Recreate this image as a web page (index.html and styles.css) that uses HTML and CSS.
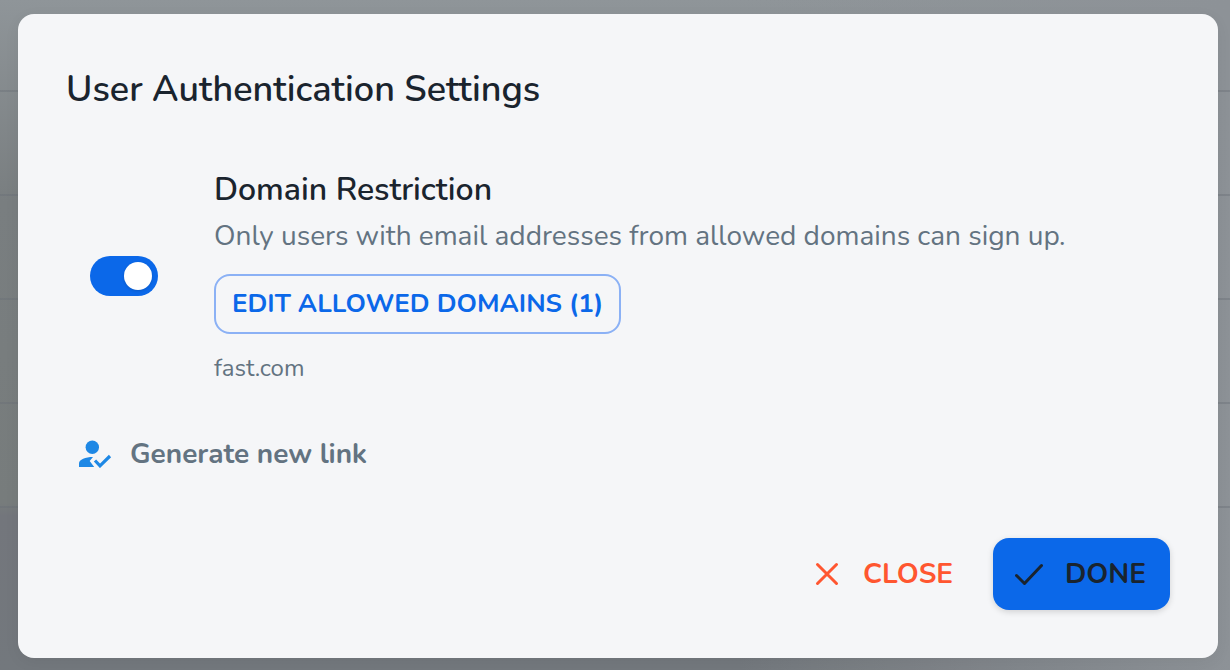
FILE: index.html
```html
<!DOCTYPE html>
<html lang="en">

<head>
    <title>User Authentication Settings</title>
    <meta charset="UTF-8">
    <link rel="stylesheet" href="styles.css">
</head>

<body>
    <div class="overlay">
        <div class="dialog" role="dialog" aria-labelledby="dialog-title">
            <h1 id="dialog-title">User Authentication Settings</h1>

            <div class="setting">
                <input type="checkbox" class="switch" id="domain-restriction" checked>
                <div class="setting-info">
                    <label class="setting-name" for="domain-restriction">Domain Restriction</label>
                    <p class="setting-text">Only users with email addresses from allowed domains can sign up.</p>
                    <button type="button" class="edit-domains">EDIT ALLOWED DOMAINS (1)</button>
                    <p class="domains">fast.com</p>
                </div>
            </div>

            <a class="generate" href="#">
                <svg class="user-icon" viewBox="0 0 34 28" aria-hidden="true">
                    <circle cx="14.300" cy="7.300" r="6.700" fill="currentColor"/>
                    <path d="M1 27v-3.500c0-4 6.500-6.500 14-6.500l-3.300 4 4.500 6z" fill="currentColor"/>
                    <path d="M17 20.500l5 5.300L32 16" fill="none" stroke="currentColor" stroke-width="3.200"/>
                </svg>
                Generate new link
            </a>

            <div class="actions">
                <button type="button" class="btn close">
                    <svg class="close-icon" viewBox="0 0 24 24" aria-hidden="true">
                        <path d="M2.500 2.500l19 19M21.500 2.500l-19 19"/>
                    </svg>
                    CLOSE
                </button>
                <button type="button" class="btn done">
                    <svg class="done-icon" viewBox="0 0 28 24" aria-hidden="true">
                        <path d="M1.500 13.500l8 8L26.500 3.500"/>
                    </svg>
                    DONE
                </button>
            </div>
        </div>
    </div>
</body>

</html>
```

FILE: styles.css
```css
* {
    margin: 0;
    padding: 0;
    box-sizing: border-box;
}

body {
    font-family: Nunito, "Noto Sans", sans-serif;
    color: #1a242e;
    background: #85898d;
}

/* dimmed page with its table lines behind the dialog */
.overlay {
    min-height: 100vh;
    padding: 14px 12px 12px 18px;
    background:
        repeating-linear-gradient(transparent 0 90px, rgba(104, 110, 118, 0.4) 90px 92px, transparent 92px 104px) 0 0 / 100% 520px no-repeat,
        linear-gradient(90deg, transparent 60%, #8d9297),
        linear-gradient(#8f9599, #797e80 30%, #777c7c 75%, #73767c 77%, #73787d);
}

.dialog {
    padding: 48px;
    background: #f5f6f8;
    border-radius: 16px;
    box-shadow: 0 4px 16px rgba(0, 0, 0, 0.05);
}

h1 {
    font-size: 36px;
    font-weight: 600;
    line-height: 56px;
}

.setting {
    display: flex;
    align-items: center;
    gap: 56px;
    margin-top: 48px;
    padding-left: 24px;
}

.switch {
    appearance: none;
    display: flex;
    align-items: center;
    justify-content: flex-end;
    flex: none;
    width: 68px;
    height: 40px;
    padding: 6px;
    border-radius: 20px;
    background: #0b68e9;
    cursor: pointer;
}

.switch::before {
    content: "";
    width: 28px;
    height: 28px;
    border-radius: 50%;
    background: #fff;
    box-shadow: 0 1px 3px rgba(0, 0, 0, 0.15);
}

.switch:not(:checked) {
    justify-content: flex-start;
    background: #97a3ad;
}

.setting-name {
    display: block;
    font-size: 32px;
    font-weight: 600;
    line-height: 48px;
}

.setting-text {
    color: #637381;
    font-size: 28px;
    line-height: 44px;
}

.edit-domains {
    height: 60px;
    margin-top: 16px;
    padding: 0 16px 2px;
    border: 2px solid #8bb1f5;
    border-radius: 16px;
    background: transparent;
    color: #0b68e9;
    font-family: inherit;
    font-size: 26px;
    font-weight: 700;
}

.domains {
    margin-top: 16px;
    color: #637381;
    font-size: 24px;
    line-height: 36px;
}

.generate {
    display: flex;
    align-items: center;
    gap: 18px;
    width: fit-content;
    margin-top: 48px;
    padding-left: 12px;
    color: #637381;
    font-size: 28px;
    font-weight: 700;
    line-height: 40px;
    text-decoration: none;
}

.user-icon {
    width: 34px;
    height: 28px;
    color: #1e88e5;
}

.actions {
    display: flex;
    justify-content: flex-end;
    gap: 16px;
    margin-top: 64px;
}

.btn {
    display: flex;
    align-items: center;
    gap: 24px;
    height: 72px;
    padding: 0 24px;
    border: none;
    border-radius: 16px;
    background: transparent;
    font-family: inherit;
    font-size: 28px;
    font-weight: 700;
}

.btn path {
    fill: none;
    stroke: currentColor;
    stroke-width: 3;
    stroke-linecap: round;
    stroke-linejoin: round;
}

.close {
    color: #ff5630;
}

.done {
    padding-left: 22px;
    gap: 22px;
    background: #0b68e9;
    color: #1a242e;
    box-shadow: 0 2px 6px rgba(0, 0, 0, 0.15);
}

.close-icon {
    width: 24px;
    height: 24px;
}

.done-icon {
    width: 28px;
    height: 24px;
}
```
